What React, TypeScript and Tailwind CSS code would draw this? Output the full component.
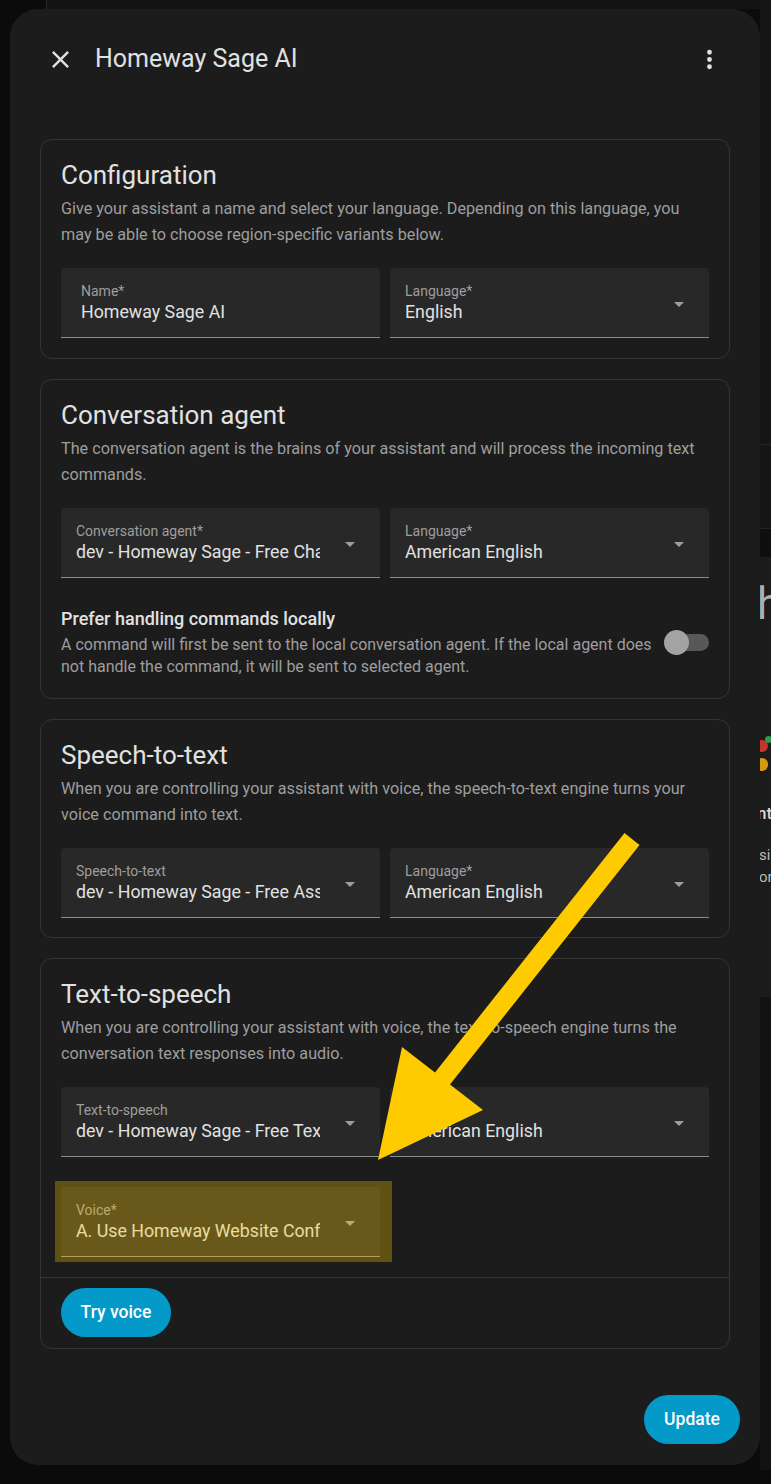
import React from "react";

function CloseIcon() {
  return (
    <svg viewBox="0 0 24 24" className="w-[29px] h-[29px]" fill="#e1e1e1">
      <path d="M19,6.41L17.59,5L12,10.59L6.41,5L5,6.41L10.59,12L5,17.59L6.41,19L12,13.41L17.59,19L19,17.59L13.41,12L19,6.41Z" />
    </svg>
  );
}

function DotsIcon() {
  return (
    <svg viewBox="0 0 24 24" className="w-[29px] h-[29px]" fill="#e1e1e1">
      <path d="M12,16A2,2 0 0,1 14,18A2,2 0 0,1 12,20A2,2 0 0,1 10,18A2,2 0 0,1 12,16M12,10A2,2 0 0,1 14,12A2,2 0 0,1 12,14A2,2 0 0,1 10,12A2,2 0 0,1 12,10M12,4A2,2 0 0,1 14,6A2,2 0 0,1 12,8A2,2 0 0,1 10,6A2,2 0 0,1 12,4Z" />
    </svg>
  );
}

function Field({
  label,
  value,
  select = true,
  clip = false,
}: {
  label: string;
  value: string;
  select?: boolean;
  clip?: boolean;
}) {
  return (
    <div className="relative h-[70px] rounded-t-[4px] bg-[#282828] border-b border-[#8c8c8c]">
      <div className={`pt-[15px] ${select ? "pl-[15px]" : "pl-[20px]"}`}>
        <div className="text-[14px] leading-[16px] text-[#9e9e9e] whitespace-nowrap">{label}</div>
        <div
          className={`mt-[2px] text-[17.8px] leading-[22px] text-[#e1e1e1] whitespace-nowrap overflow-hidden ${
            clip ? "w-[244px]" : ""
          }`}
        >
          {value}
        </div>
      </div>
      {select && (
        <div className="absolute right-[25px] top-[34px] w-0 h-0 border-l-[5px] border-r-[5px] border-t-[5px] border-l-transparent border-r-transparent border-t-[#9e9e9e]" />
      )}
    </div>
  );
}

function CardHead({ title, lines }: { title: string; lines: string[] }) {
  return (
    <div>
      <div className="text-[26px] leading-[32px] text-[#e1e1e1]">{title}</div>
      <div className="mt-[5px] text-[16.2px] leading-[26px] text-[#9e9e9e] whitespace-nowrap">
        {lines[0]}
        <br />
        {lines[1]}
      </div>
    </div>
  );
}

function Toggle() {
  return (
    <div className="relative w-[45px] h-[25px] flex-none">
      <div className="absolute left-[9px] top-[4px] w-[36px] h-[17px] rounded-full bg-[#585858]" />
      <div className="absolute left-0 top-0 w-[25px] h-[25px] rounded-full bg-[#a3a3a3]" />
    </div>
  );
}

export default function App() {
  return (
    <div className="relative w-[771px] h-[1484px] overflow-hidden bg-[#0b0b0b] font-['Roboto',sans-serif]">
      {/* background page slivers */}
      <div className="absolute left-[46px] top-0 w-[725px] h-[9px] bg-[#131313] border-l border-[#2b2b2b]" />
      <div className="absolute left-[760px] top-0 w-[11px] h-[1470px] flex flex-col overflow-hidden">
        <div className="h-[445px] bg-[#141414] border-b border-[#262626]" />
        <div className="h-[84px] bg-[#151515] border-b border-[#242424]" />
        <div className="h-[28px] bg-[#0f0f0f]" />
        <div className="relative h-[440px] bg-[#1b1b1b]">
          <div className="absolute left-[-3px] top-[22px] text-[44px] leading-[50px] text-[#a6b0ba]">h</div>
          <div className="absolute left-[-4px] top-[183px] w-[12px] h-[12px] rounded-full bg-[#c5352b]" />
          <div className="absolute left-[5px] top-[179px] w-[7px] h-[7px] rounded-full bg-[#2e9b47]" />
          <div className="absolute left-[-4px] top-[201px] w-[12px] h-[13px] rounded-full bg-[#d49a10]" />
          <div className="absolute left-[-3px] top-[246px] text-[17px] leading-[20px] font-medium text-[#d6d6d6]">nt</div>
          <div className="absolute left-[-1px] top-[287px] text-[15px] leading-[22px] text-[#b8b8b8]">
            si
            <br />
            or
          </div>
        </div>
        <div className="flex-1 bg-[#121212]" />
      </div>

      {/* dialog */}
      <div className="relative ml-[10px] mt-[9px] w-[750px] h-[1456px] rounded-[28px] bg-[#1c1c1c] flex flex-col">
        <div className="mt-[26px] h-[48px] flex items-center pl-[36px] pr-[36px]">
          <CloseIcon />
          <div className="ml-[20px] text-[25px] leading-[32px] text-[#e1e1e1]">Homeway Sage AI</div>
          <div className="flex-1" />
          <DotsIcon />
        </div>

        <div className="mt-[56px] px-[30px] flex flex-col gap-[20px]">
          {/* Configuration */}
          <div className="rounded-[12px] border border-[#343434] px-[20px] pt-[19px] pb-[20px]">
            <CardHead
              title="Configuration"
              lines={[
                "Give your assistant a name and select your language. Depending on this language, you",
                "may be able to choose region-specific variants below.",
              ]}
            />
            <div className="mt-[20px] grid grid-cols-2 gap-[10px]">
              <Field label="Name*" value="Homeway Sage AI" select={false} />
              <Field label="Language*" value="English" />
            </div>
          </div>

          {/* Conversation agent */}
          <div className="rounded-[12px] border border-[#343434] px-[20px] pt-[19px] pb-[20px]">
            <CardHead
              title="Conversation agent"
              lines={[
                "The conversation agent is the brains of your assistant and will process the incoming text",
                "commands.",
              ]}
            />
            <div className="mt-[20px] grid grid-cols-2 gap-[10px]">
              <Field label="Conversation agent*" value="dev - Homeway Sage - Free Chat" clip />
              <Field label="Language*" value="American English" />
            </div>
            <div className="mt-[29px] flex items-center">
              <div className="flex-1">
                <div className="text-[18px] leading-[24px] font-medium text-[#e1e1e1]">
                  Prefer handling commands locally
                </div>
                <div className="mt-[3px] text-[16px] leading-[22px] text-[#9e9e9e] whitespace-nowrap">
                  A command will first be sent to the local conversation agent. If the local agent does
                  <br />
                  not handle the command, it will be sent to selected agent.
                </div>
              </div>
              <Toggle />
            </div>
          </div>

          {/* Speech-to-text */}
          <div className="rounded-[12px] border border-[#343434] px-[20px] pt-[19px] pb-[19px]">
            <CardHead
              title="Speech-to-text"
              lines={[
                "When you are controlling your assistant with voice, the speech-to-text engine turns your",
                "voice command into text.",
              ]}
            />
            <div className="mt-[20px] grid grid-cols-2 gap-[10px]">
              <Field label="Speech-to-text" value="dev - Homeway Sage - Free Assist" clip />
              <Field label="Language*" value="American English" />
            </div>
          </div>

          {/* Text-to-speech */}
          <div className="rounded-[12px] border border-[#343434]">
            <div className="px-[20px] pt-[19px] pb-[20px]">
              <CardHead
                title="Text-to-speech"
                lines={[
                  "When you are controlling your assistant with voice, the text-to-speech engine turns the",
                  "conversation text responses into audio.",
                ]}
              />
              <div className="mt-[20px] grid grid-cols-2 gap-[10px]">
                <Field label="Text-to-speech" value="dev - Homeway Sage - Free Text" clip />
                <Field label="Language*" value="American English" />
              </div>
              <div className="mt-[30px] grid grid-cols-2 gap-[10px]">
                <div className="relative">
                  <Field label="Voice*" value="A. Use Homeway Website Config" clip />
                  <div className="absolute left-[-6px] top-[-6px] w-[337px] h-[81px] bg-[#ffcc00]/30" />
                </div>
              </div>
            </div>
            <div className="border-t border-[#343434] px-[20px] pt-[10px] pb-[11px]">
              <button className="h-[49px] w-[110px] rounded-full bg-[#0399c8] text-white text-[17.5px] font-medium">
                Try voice
              </button>
            </div>
          </div>
        </div>

        <div className="mt-[46px] pr-[20px] flex justify-end">
          <button className="h-[49px] w-[96px] rounded-full bg-[#0399c8] text-white text-[17.5px] font-medium">
            Update
          </button>
        </div>
      </div>

      {/* annotation arrow */}
      <svg className="absolute left-0 top-0 w-[771px] h-[1484px] pointer-events-none" viewBox="0 0 771 1484">
        <polygon
          points="624.5,833 639.5,845 450,1084.5 483,1110 378,1160 402,1047 435,1072.5"
          fill="#fecb00"
        />
      </svg>
    </div>
  );
}
